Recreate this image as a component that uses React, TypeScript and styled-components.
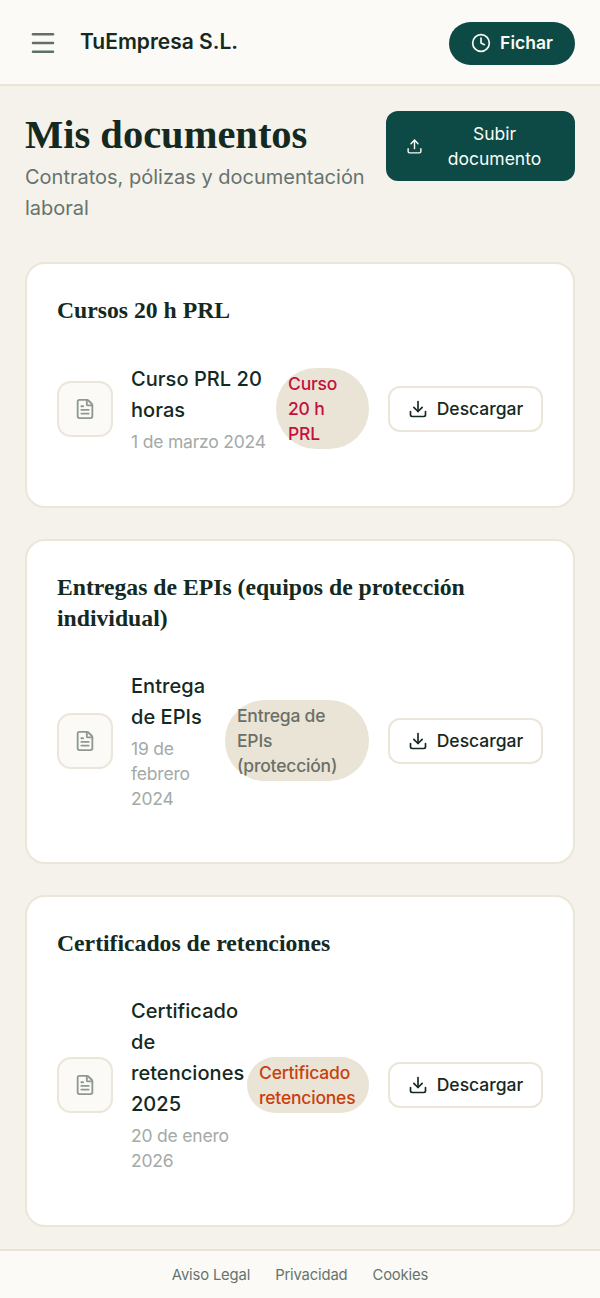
import React from 'react'
import styled, { createGlobalStyle } from 'styled-components'
import { Clock, Download, FileText, Menu, Upload } from 'lucide-react'

const sans = `'Inter', 'Liberation Sans', Arial, sans-serif`
const serif = `'Liberation Serif', 'Times New Roman', serif`

const GlobalStyle = createGlobalStyle`
  html, body {
    margin: 0;
    padding: 0;
    background: #f5f2eb;
    font-family: ${sans};
    color: #14291f;
  }
  * {
    box-sizing: border-box;
  }
`

const Page = styled.div`
  width: 600px;
  height: 1298px;
  display: flex;
  flex-direction: column;
  overflow: hidden;
`

const Header = styled.header`
  height: 86px;
  flex: none;
  display: flex;
  align-items: center;
  padding: 2px 25px 0 28px;
  background: #fbfaf6;
  border-bottom: 2px solid #e9e4d6;
`

const MenuButton = styled.div`
  display: flex;
  color: #5f6f69;
  margin-right: 22px;
`

const Brand = styled.div`
  flex: 1;
  font-size: 21px;
  font-weight: 600;
  color: #14291f;
  margin-top: -4px;
`

const ClockButton = styled.button`
  width: 126px;
  height: 43px;
  display: flex;
  align-items: center;
  justify-content: center;
  gap: 9px;
  padding: 0 0 1px;
  border: 0;
  border-radius: 22px;
  background: #0d4a45;
  color: #fbfaf6;
  font-family: ${sans};
  font-size: 17.5px;
  font-weight: 600;
`

const Main = styled.main`
  flex: 1;
  padding: 25px 25px 0;
  display: flex;
  flex-direction: column;
`

const TitleRow = styled.div`
  display: flex;
  justify-content: space-between;
  align-items: flex-start;
  margin-bottom: 38px;
`

const TitleBlock = styled.div`
  width: 345px;
`

const Title = styled.h1`
  margin: 0 0 3px;
  font-family: ${serif};
  font-size: 40.5px;
  line-height: 48px;
  font-weight: 700;
  color: #14291f;
`

const Subtitle = styled.p`
  margin: 0;
  font-size: 20px;
  line-height: 31px;
  color: #66736e;
`

const UploadButton = styled.button`
  width: 189px;
  height: 70px;
  display: flex;
  align-items: center;
  gap: 3px;
  padding: 0 12px 0 20px;
  border: 0;
  border-radius: 12px;
  background: #0d4a45;
  color: #fbfaf6;
  font-family: ${sans};
  font-size: 17.5px;
  line-height: 25px;
  font-weight: 400;
`

const UploadLabel = styled.span`
  flex: 1;
  text-align: center;
`

const CardList = styled.div`
  display: flex;
  flex-direction: column;
  gap: 31px;
`

const Card = styled.section<{ $height: number }>`
  height: ${({ $height }) => $height}px;
  padding: 31px 30px 30px;
  display: flex;
  flex-direction: column;
  background: #fff;
  border: 2px solid #ebe6d8;
  border-radius: 20px;
`

const CardTitle = styled.h2`
  margin: 0;
  font-family: ${serif};
  font-size: 23.7px;
  line-height: 31px;
  font-weight: 700;
  color: #14291f;
`

const DocRow = styled.div`
  flex: 1;
  display: flex;
  align-items: center;
  margin-top: 15px;
`

const DocIcon = styled.div`
  width: 56px;
  height: 56px;
  flex: none;
  display: flex;
  align-items: center;
  justify-content: center;
  margin-right: 18px;
  background: #fbfaf6;
  border: 2px solid #ebe6d8;
  border-radius: 14px;
  color: #8f9994;
`

const DocText = styled.div`
  flex: 1;
  min-width: 0;
`

const DocName = styled.div`
  font-size: 20px;
  line-height: 31px;
  font-weight: 500;
  letter-spacing: 0.05px;
  color: #14291f;
`

const DocDate = styled.div`
  margin-top: 3px;
  font-size: 17.5px;
  line-height: 25px;
  letter-spacing: -0.2px;
  color: #a3aaa7;
`

const Badge = styled.span<{ $width: number; $color: string }>`
  width: ${({ $width }) => $width}px;
  flex: none;
  padding: 3px 12px;
  margin-right: 19px;
  border-radius: 40px;
  background: #e9e4d6;
  color: ${({ $color }) => $color};
  font-size: 17.5px;
  line-height: 25px;
  font-weight: 500;
  letter-spacing: -0.2px;
`

const DownloadButton = styled.button`
  width: 155px;
  height: 46px;
  flex: none;
  display: flex;
  align-items: center;
  justify-content: center;
  gap: 9px;
  background: #fff;
  border: 2px solid #ebe6d8;
  border-radius: 12px;
  color: #14291f;
  font-family: ${sans};
  font-size: 17.5px;
  font-weight: 500;
`

const Footer = styled.footer`
  height: 49px;
  flex: none;
  display: flex;
  align-items: center;
  justify-content: center;
  gap: 25px;
  background: #fbfaf6;
  border-top: 2px solid #e9e4d6;
  font-size: 14.8px;
  letter-spacing: -0.15px;
  color: #66736e;
`

const docs = [
  {
    section: 'Cursos 20 h PRL',
    name: 'Curso PRL 20 horas',
    date: '1 de marzo 2024',
    badge: 'Curso 20 h PRL',
    badgeWidth: 93,
    badgeColor: '#c4103c',
    height: 246,
  },
  {
    section: 'Entregas de EPIs (equipos de protección individual)',
    name: 'Entrega de EPIs',
    date: '19 de febrero 2024',
    badge: 'Entrega de EPIs (protección)',
    badgeWidth: 144,
    badgeColor: '#6b6f66',
    height: 325,
  },
  {
    section: 'Certificados de retenciones',
    name: 'Certificado de retenciones 2025',
    date: '20 de enero 2026',
    badge: 'Certificado retenciones',
    badgeWidth: 122,
    badgeColor: '#c93f0d',
    height: 332,
  },
]

const App = () => (
  <Page>
    <GlobalStyle />
    <Header>
      <MenuButton>
        <Menu size={30} strokeWidth={2} />
      </MenuButton>
      <Brand>TuEmpresa S.L.</Brand>
      <ClockButton>
        <Clock size={20} strokeWidth={2} />
        Fichar
      </ClockButton>
    </Header>
    <Main>
      <TitleRow>
        <TitleBlock>
          <Title>Mis documentos</Title>
          <Subtitle>Contratos, pólizas y documentación laboral</Subtitle>
        </TitleBlock>
        <UploadButton>
          <Upload size={17} strokeWidth={2} />
          <UploadLabel>Subir documento</UploadLabel>
        </UploadButton>
      </TitleRow>
      <CardList>
        {docs.map((doc) => (
          <Card key={doc.section} $height={doc.height}>
            <CardTitle>{doc.section}</CardTitle>
            <DocRow>
              <DocIcon>
                <FileText size={22} strokeWidth={2} />
              </DocIcon>
              <DocText>
                <DocName>{doc.name}</DocName>
                <DocDate>{doc.date}</DocDate>
              </DocText>
              <Badge $width={doc.badgeWidth} $color={doc.badgeColor}>
                {doc.badge}
              </Badge>
              <DownloadButton>
                <Download size={20} strokeWidth={2} />
                Descargar
              </DownloadButton>
            </DocRow>
          </Card>
        ))}
      </CardList>
    </Main>
    <Footer>
      <span>Aviso Legal</span>
      <span>Privacidad</span>
      <span>Cookies</span>
    </Footer>
  </Page>
)

export default App
